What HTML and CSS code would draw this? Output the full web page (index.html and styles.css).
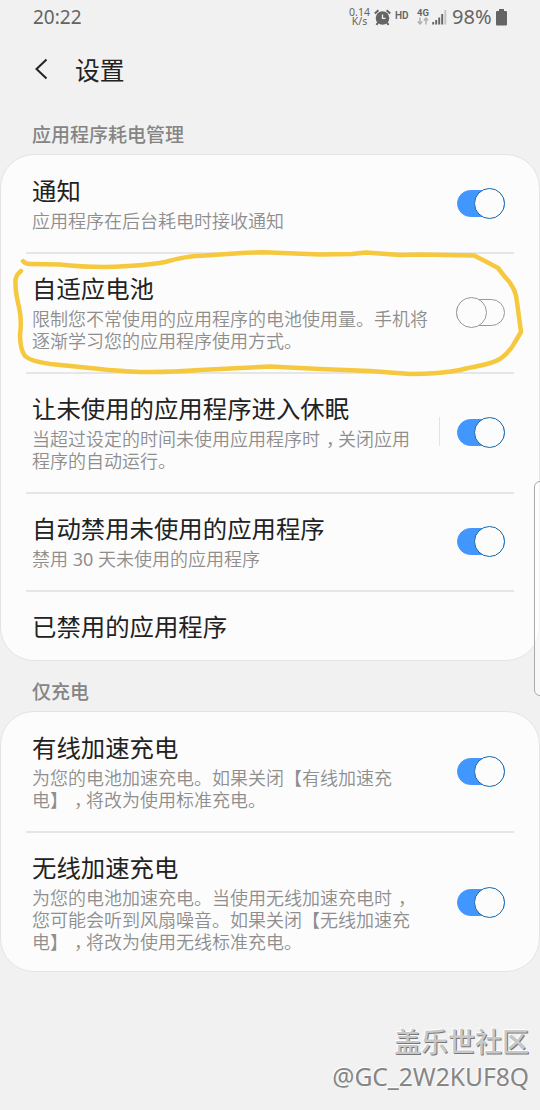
FILE: index.html
```html
<!DOCTYPE html>
<html lang="zh-CN">
<head>
<meta charset="utf-8">
<title>设置</title>
<link rel="stylesheet" href="styles.css">
</head>
<body>
<div class="screen">
  <header class="status">
    <span class="clock">20:22</span>
    <div class="indicators">
      <span class="speed"><span>0.14</span><span>K/s</span></span>
      <svg class="alarm" width="17" height="17" viewBox="0 0 17 17">
        <circle cx="8.500" cy="9" r="6.800" fill="#646464"/>
        <path d="M.8 4.600 4.400 1.200M16.200 4.600 12.600 1.200M4.200 13.500l-1.800 2.300M12.800 13.500l1.800 2.300" stroke="#646464" stroke-width="2" fill="none"/>
        <path d="M8.500 5.500v3.800h3" stroke="#f1f1f1" stroke-width="1.300" fill="none"/>
      </svg>
      <span class="hd">HD</span>
      <span class="net"><span>4G</span>
        <svg width="12" height="8" viewBox="0 0 12 8"><path d="M3 .5v6M.8 4.500 3 6.900l2.200-2.400M9 7.500v-6M6.800 3.500 9 1.100l2.200 2.400" fill="none" stroke="#b0b0b0" stroke-width="1.500"/></svg>
      </span>
      <svg class="signal" width="15" height="16" viewBox="0 0 15 16">
        <path d="M1.200 13v2.500M4.200 11v4.500M7.200 8.500v7M10.200 5v10.500" stroke="#646464" stroke-width="1.900"/>
        <path d="M13.300 1v14.500" stroke="#c4c4c4" stroke-width="1.900"/>
      </svg>
      <span class="percent">98%</span>
      <svg class="battery" width="11" height="17" viewBox="0 0 11 17"><path d="M3 0h5v2h2q1 0 1 1v12.500q0 1-1 1H1q-1 0-1-1V3q0-1 1-1h2z" fill="#646464"/></svg>
    </div>
  </header>
  <nav class="bar">
    <svg class="back" width="14" height="22" viewBox="0 0 14 22"><path d="M12.500 1.500 2.500 11l10 9.500" fill="none" stroke="#222" stroke-width="2"/></svg>
    <h1>设置</h1>
  </nav>
  <h2 class="label first">应用程序耗电管理</h2>
  <section class="card">
    <div class="row">
      <div class="text"><h3>通知</h3><p>应用程序在后台耗电时接收通知</p></div>
      <span class="switch on"></span>
    </div>
    <div class="row">
      <div class="text"><h3>自适应电池</h3><p>限制您不常使用的应用程序的电池使用量。手机将<br>逐渐学习您的应用程序使用方式。</p></div>
      <span class="switch"></span>
    </div>
    <div class="row">
      <div class="text"><h3>让未使用的应用程序进入休眠</h3><p>当超过设定的时间未使用应用程序时<span class="comma">，</span>关闭应用<br>程序的自动运行。</p></div>
      <span class="split"></span>
      <span class="switch on"></span>
    </div>
    <div class="row">
      <div class="text"><h3>自动禁用未使用的应用程序</h3><p>禁用 <span class="num">30</span> 天未使用的应用程序</p></div>
      <span class="switch on"></span>
    </div>
    <div class="row">
      <div class="text"><h3>已禁用的应用程序</h3></div>
    </div>
  </section>
  <h2 class="label">仅充电</h2>
  <section class="card">
    <div class="row">
      <div class="text"><h3>有线加速充电</h3><p>为您的电池加速充电。如果关闭【有线加速充<br>电】<span class="comma">，</span>将改为使用标准充电。</p></div>
      <span class="switch on"></span>
    </div>
    <div class="row">
      <div class="text"><h3>无线加速充电</h3><p>为您的电池加速充电。当使用无线加速充电时<span class="comma">，</span><br>您可能会听到风扇噪音。如果关闭【无线加速充<br>电】<span class="comma">，</span>将改为使用无线标准充电。</p></div>
      <span class="switch on"></span>
    </div>
  </section>
  <footer class="mark"><span class="forum">盖乐世社区</span><span class="user">@GC_2W2KUF8Q</span></footer>
  <div class="edge"></div>
  <svg class="ink" width="540" height="140" viewBox="0 245 540 140">
    <path d="M23 261Q25 264 30 264L60 264.500Q80 267 105 267Q145 266 165 262Q185 256 205 255.500L235 253.500Q255 252 270 252.500L320 254.500L352 254L366 252.500L400 255L420 254.500L474 255.500L485 261L498 268L505 277Q516 288 517 302L521 332L515 342Q510 352 500 359C488 366 474 366 460 370Q440 374 410 374L370 371L320 369L270 366.500L200 370Q160 373 130 371.500C100 370 75 366 50 364Q30 361 25 356Q20 349 20 335Q22 320 19 307Q15 291 15.500 280Q16 275 21 271"/>
  </svg>
</div>
</body>
</html>
```
FILE: styles.css
```css
* { box-sizing: border-box; }
body { margin: 0; background: #f1f1f1; font-family: "Noto Sans CJK SC", sans-serif; }
h1, h2, h3, p { margin: 0; font-weight: 400; white-space: nowrap; }
svg { display: block; flex: none; }
.screen { position: relative; height: 1110px; overflow: hidden; display: flex; flex-direction: column; }

.status { height: 34px; padding: 0 33px; display: flex; justify-content: space-between; align-items: center; color: #646464; font-family: Roboto, sans-serif; }
.clock { font: 19px/34px "Noto Sans", sans-serif; }
.indicators { display: flex; align-items: center; height: 34px; }
.speed { width: 21px; display: flex; flex-direction: column; align-items: center; font: 10.5px/9px "Noto Sans", sans-serif; }
.alarm { margin-left: 4px; }
.hd { margin: -3px 0 0 4px; font-size: 10px; font-weight: 600; width: 15px; }
.net { margin: -2px 0 0 7px; width: 13px; font-size: 9.5px; font-weight: 700; line-height: 9px; }
.signal { margin-left: 2px; }
.percent { margin-left: 5px; font: 20px/34px "Noto Sans", sans-serif; width: 41px; }
.battery { margin-left: 3px; }

.bar { height: 68px; padding: 1px 0 0 34px; display: flex; align-items: center; color: #222; }
.bar h1 { margin-left: 27px; font-size: 24.8px; line-height: 36px; }

.label { height: 50px; padding: 17px 32px 0; font-size: 19px; font-weight: 500; line-height: 26px; color: #858585; }
.label.first { height: 52px; padding-top: 19px; }

.card { flex: none; border: 1px solid #e4e4e4; border-radius: 34px; background: #fcfcfc; padding: 1px 25px 0; }
.row { display: flex; align-items: center; padding: 15px 9px 19px 6px; border-bottom: 2px solid #e6e6e6; }
.row:last-child { border-bottom: 0; padding-bottom: 18px; }
.row:last-child h3:only-child { margin-bottom: -2px; }
.text { flex: 1; min-width: 0; }
h3 { font-size: 24.4px; line-height: 37px; color: #222; }
p { margin-top: 3px; margin-bottom: 0; font-family: "Noto Sans", "Noto Sans CJK SC", sans-serif; font-size: 18px; line-height: 22px; color: #8e8e8e; font-weight: 350; }
.row:not(:last-child) p { margin-top: 2px; margin-bottom: 1px; }
.row:last-child p { margin-top: 2px; }
.num { font-weight: 400; }
.comma { display: inline-block; width: 18px; padding-left: 6px; }
.split { width: 1px; height: 29px; margin-right: 17px; background: #e2e2e2; }

.switch { flex: none; display: flex; align-items: center; width: 49px; height: 27px; border: 1px solid #999; border-radius: 14px; background: #fcfcfc; margin: 3px 0 0; }
.switch::before { content: ""; flex: none; width: 29px; height: 29px; margin-left: -1px; border: 1px solid #999; border-radius: 50%; background: #fcfcfc; }
.switch.on { justify-content: flex-end; border-color: #4297ff; background: #4297ff; width: 48px; }
.switch.on::before { margin-right: -1px; border-color: #1768a8; }

.mark { margin: auto 11px 16px 0; display: flex; flex-direction: column; align-items: flex-end; }
.forum { font-size: 27px; line-height: 36px; font-weight: 500; color: #c8c8c8; text-shadow: 1px 1px 0 #777, -1px -1px 0 #fff; }
.user { font: 24.6px/35px "Noto Sans", sans-serif; color: #868686; text-shadow: -1px -1px 0 #fff; }

.edge { position: absolute; left: 534px; top: 481px; width: 12px; height: 215px; border: 1px solid #aaa; border-radius: 7px; background: rgba(255,255,255,.5); }
.ink { position: absolute; left: 0; top: 245px; }
.ink path { fill: none; stroke: #f5c83e; stroke-width: 4.5; stroke-linecap: round; stroke-linejoin: round; }
```
